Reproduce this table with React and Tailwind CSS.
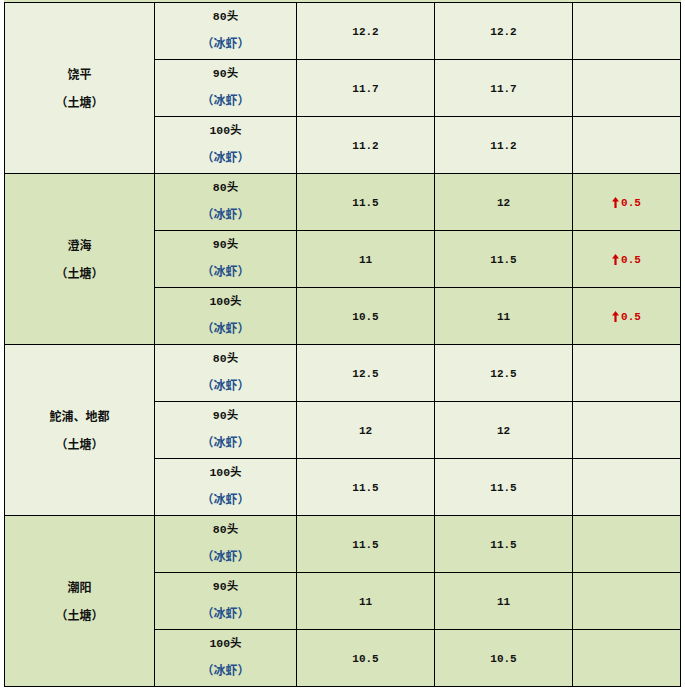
import React from "react";

const groups = [
  {
    name: "饶平",
    bg: "bg-[#ebf1de]",
    rows: [
      ["80头", "12.2", "12.2", ""],
      ["90头", "11.7", "11.7", ""],
      ["100头", "11.2", "11.2", ""],
    ],
  },
  {
    name: "澄海",
    bg: "bg-[#d8e4bc]",
    rows: [
      ["80头", "11.5", "12", "0.5"],
      ["90头", "11", "11.5", "0.5"],
      ["100头", "10.5", "11", "0.5"],
    ],
  },
  {
    name: "鮀浦、地都",
    bg: "bg-[#ebf1de]",
    rows: [
      ["80头", "12.5", "12.5", ""],
      ["90头", "12", "12", ""],
      ["100头", "11.5", "11.5", ""],
    ],
  },
  {
    name: "潮阳",
    bg: "bg-[#d8e4bc]",
    rows: [
      ["80头", "11.5", "11.5", ""],
      ["90头", "11", "11", ""],
      ["100头", "10.5", "10.5", ""],
    ],
  },
];

const font = { fontFamily: '"Liberation Mono", "Noto Sans CJK SC", monospace' };

const Cell = ({ children, className = "", rowSpan }) => (
  <td rowSpan={rowSpan} className={"border border-black text-center align-middle p-0 " + className}>
    {children}
  </td>
);

const UpArrow = () => (
  <svg width="7" height="11" viewBox="0 0 7 11" className="inline-block mr-[2px] -mt-[2px] align-middle">
    <path d="M3.5 0 L7 4.5 L4.6 4.5 L4.6 11 L2.4 11 L2.4 4.5 L0 4.5 Z" fill="#d00000" />
  </svg>
);

export default function App() {
  return (
    <div className="min-h-screen bg-white pl-[4px]" style={font}>
      <div className="w-[677px] h-[2px] bg-[#d8e4bc]"></div>
      <table className="table-fixed border-collapse w-[677px] font-bold text-[12px] text-[#111]">
        <colgroup>
          <col className="w-[150px]" />
          <col className="w-[142px]" />
          <col className="w-[138px]" />
          <col className="w-[138px]" />
          <col className="w-[108px]" />
        </colgroup>
        <tbody>
          {groups.map((g) =>
            g.rows.map((r, i) => (
              <tr key={g.name + i} className={"h-[57px] " + g.bg}>
                {i === 0 && (
                  <Cell rowSpan={3} className="pt-[3px]">
                    <div className="leading-[28px]">{g.name}</div>
                    <div className="leading-[28px]">（土塘）</div>
                  </Cell>
                )}
                <Cell>
                  <div className="leading-[28px] text-[11.5px]">{r[0]}</div>
                  <div className="leading-[28px] text-[#234f8c]">（冰虾）</div>
                </Cell>
                <Cell className="pt-[3px] text-[11px]">{r[1]}</Cell>
                <Cell className="pt-[3px] text-[11px]">{r[2]}</Cell>
                <Cell className="pt-[3px] text-[11px] text-[#d00000]">
                  {r[3] && (
                    <span>
                      <UpArrow />
                      {r[3]}
                    </span>
                  )}
                </Cell>
              </tr>
            ))
          )}
        </tbody>
      </table>
    </div>
  );
}
